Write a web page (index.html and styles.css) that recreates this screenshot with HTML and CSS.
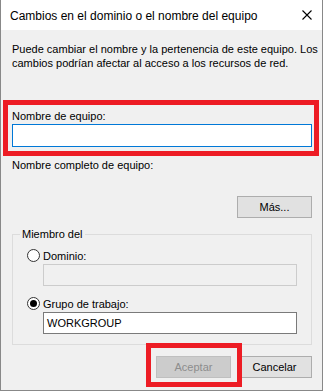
FILE: index.html
```html
<!DOCTYPE html>
<html lang="es">
<head>
    <meta charset="UTF-8">
    <title>Cambios en el dominio o el nombre del equipo</title>
    <link rel="stylesheet" href="styles.css">
</head>
<body>
    <div class="window">
        <!-- barra de título -->
        <div class="titlebar">
            <span class="title">Cambios en el dominio o el nombre del equipo</span>
            <svg class="close" width="10" height="10" viewBox="0 0 10 10">
                <path d="M0.5 0.5 L9.5 9.5 M9.5 0.5 L0.5 9.5" stroke="#000" stroke-width="1.1" fill="none"/>
            </svg>
        </div>

        <div class="content">
            <p class="intro">Puede cambiar el nombre y la pertenencia de este equipo. Los cambios podrían afectar al acceso a los recursos de red.</p>

            <div class="label name-label">Nombre de equipo:</div>
            <div class="textbox focused"></div>

            <div class="label full-label">Nombre completo de equipo:</div>

            <div class="more-row">
                <div class="button">Más...</div>
            </div>

            <fieldset class="group">
                <legend>Miembro del</legend>
                <div class="radio-row">
                    <span class="radio"></span>
                    <span>Dominio:</span>
                </div>
                <div class="textbox disabled"></div>
                <div class="radio-row second">
                    <span class="radio checked"></span>
                    <span>Grupo de trabajo:</span>
                </div>
                <div class="textbox value">WORKGROUP</div>
            </fieldset>

            <div class="buttons">
                <div class="button disabled">Aceptar</div>
                <div class="button">Cancelar</div>
            </div>
        </div>

        <!-- marcos rojos de resaltado -->
        <div class="highlight hl-name"></div>
        <div class="highlight hl-ok"></div>
    </div>
</body>
</html>
```

FILE: styles.css
```css
/* ventana */
body, html {
    margin: 0;
    padding: 0;
    background: #f0f0f0;
}

.window {
    position: relative;
    box-sizing: border-box;
    width: 323px;
    height: 391px;
    border: 1px solid #888888;
    border-top: none;
    background: #f0f0f0;
    font-family: 'Liberation Sans', Arial, sans-serif;
    font-size: 11px;
    color: #000;
    overflow: hidden;
}

/* barra de título */
.titlebar {
    display: flex;
    align-items: center;
    justify-content: space-between;
    height: 30px;
    padding: 0 10px 0 9px;
    background: #ffffff;
}

.title {
    font-size: 12px;
    padding-top: 1px;
}

.close {
    display: block;
}

/* contenido */
.content {
    padding: 0 10px 0 11px;
    display: flex;
    flex-direction: column;
}

.intro {
    margin: 12px -8px 0 0;
    line-height: 14px;
}

.label {
    line-height: 15px;
}

.name-label {
    margin-top: 39px;
}

.full-label {
    margin-top: 11px;
}

.textbox {
    box-sizing: border-box;
    height: 23px;
    border: 1px solid #7a7a7a;
    background: #ffffff;
}

.textbox.focused {
    border-color: #0078d7;
}

.textbox.disabled {
    width: 254px;
    height: 22px;
    margin-left: 16px;
    background: #f0f0f0;
    border-color: #cccccc;
}

.textbox.value {
    width: 254px;
    height: 22px;
    margin: 0 0 0 16px;
    padding: 0 3px;
    line-height: 20px;
}

/* botones */
.more-row {
    display: flex;
    justify-content: flex-end;
    margin-top: 23px;
}

.button {
    box-sizing: border-box;
    width: 75px;
    height: 22px;
    line-height: 20px;
    text-align: center;
    background: #e1e1e1;
    border: 1px solid #adadad;
}

.button.disabled {
    background: #cccccc;
    border-color: #bfbfbf;
    color: #8d8d8d;
}

.buttons {
    display: flex;
    justify-content: flex-end;
    gap: 6px;
    margin-top: 11px;
}

/* grupo */
.group {
    margin: 9px 0 0;
    padding: 2px 13px 10px 14px;
    border: 1px solid #dcdcdc;
    min-width: 0;
}

.group legend {
    padding: 0 2px;
    margin-left: -7px;
    line-height: 15px;
}

.radio-row {
    display: flex;
    align-items: center;
    gap: 3px;
    height: 15px;
    margin-top: 4px;
    margin-bottom: 1px;
}

.radio-row.second {
    margin-top: 10px;
}

.radio {
    box-sizing: border-box;
    width: 13px;
    height: 13px;
    border: 1px solid #333333;
    border-radius: 50%;
    background: #ffffff;
    position: relative;
}

.radio.checked::after {
    content: "";
    position: absolute;
    left: 2px;
    top: 2px;
    width: 7px;
    height: 7px;
    border-radius: 50%;
    background: #000;
}

/* resaltado rojo */
.highlight {
    position: absolute;
    box-sizing: border-box;
    border: 5px solid #ed1c24;
}

.hl-name {
    left: 2px;
    top: 100px;
    width: 316px;
    height: 56px;
}

.hl-ok {
    left: 145px;
    top: 343px;
    width: 96px;
    height: 44px;
}
```
